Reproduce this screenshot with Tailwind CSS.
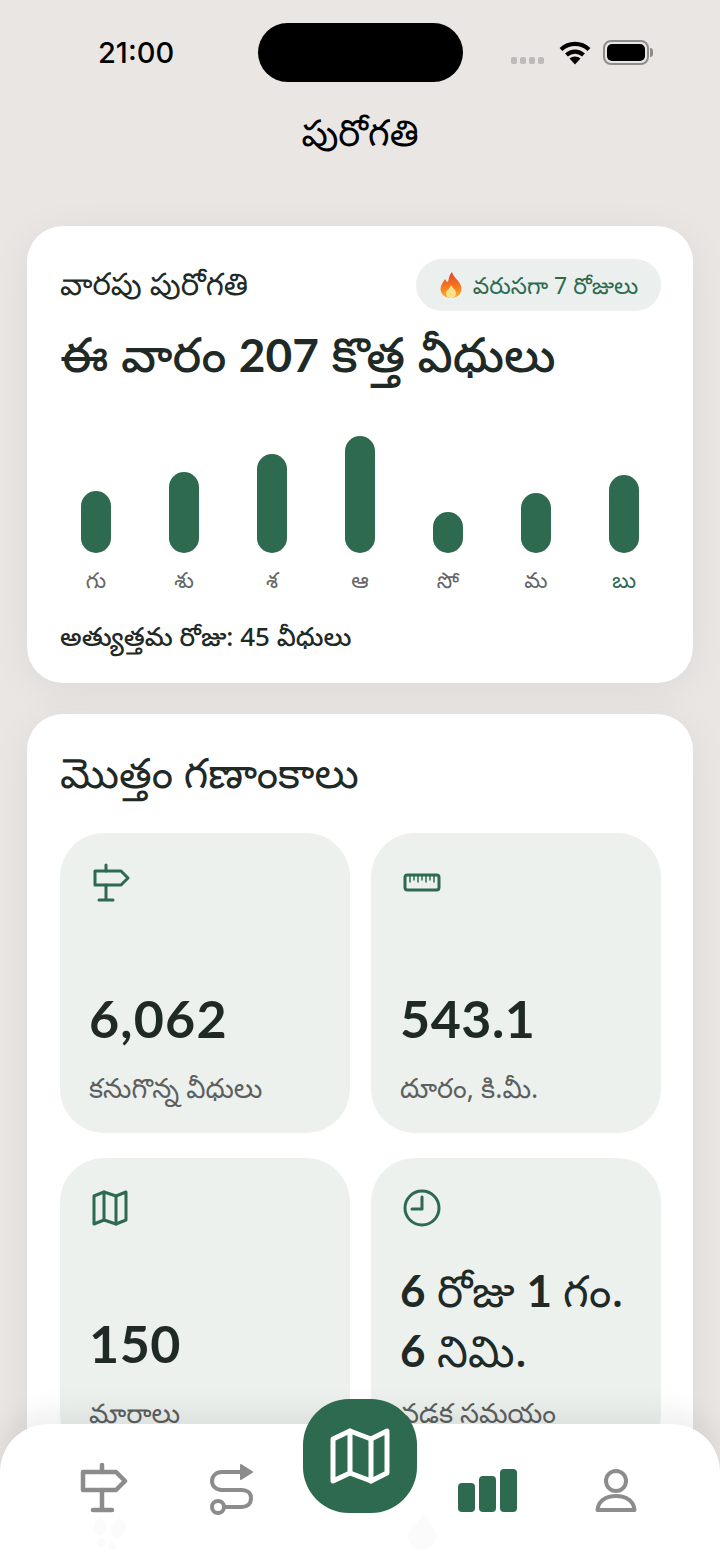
<!DOCTYPE html>
<html lang="te">
  <head>
    <meta charset="UTF-8" />
    <meta name="viewport" content="width=device-width, initial-scale=1.0" />
    <title>పురోగతి</title>
    <script src="https://cdn.jsdelivr.net/npm/@tailwindcss/browser@4"></script>
  </head>
  <body class="bg-[#e9e6e3]">
    <div class="relative h-[1564px] w-[720px] overflow-hidden bg-[#e9e6e3] font-['Noto_Sans','Noto_Sans_Telugu','Lato',sans-serif] text-[#1f2a26]">
      <!-- Status bar -->
      <div class="relative h-[106px]">
        <div class="absolute left-[98px] top-[36px] font-['Inter',sans-serif] text-[29px] leading-[34px] font-medium text-black">21:00</div>
        <div class="absolute left-[258px] top-[23px] h-[59px] w-[205px] rounded-[30px] bg-black"></div>
        <div class="absolute left-[511px] top-[57px] flex gap-[3px]">
          <span class="h-[7px] w-[6px] rounded-[2px] bg-[#bdbbb9]"></span>
          <span class="h-[7px] w-[6px] rounded-[2px] bg-[#bdbbb9]"></span>
          <span class="h-[7px] w-[6px] rounded-[2px] bg-[#bdbbb9]"></span>
          <span class="h-[7px] w-[6px] rounded-[2px] bg-[#bdbbb9]"></span>
        </div>
        <svg class="absolute left-[559px] top-[40px]" width="32" height="25" viewBox="0 0 32 25" fill="none">
          <path d="M2 9.5C10 2 22 2 30 9.5" stroke="#000" stroke-width="4.2" />
          <path d="M7.5 15C12.5 10.5 19.5 10.5 24.5 15" stroke="#000" stroke-width="4.2" />
          <path d="M16 24.5L10.5 18.5C13.5 15.8 18.5 15.8 21.5 18.5Z" fill="#000" />
        </svg>
        <div class="absolute left-[603px] top-[40px] flex h-[25px] w-[46px] items-center justify-center rounded-[8px] border-2 border-[#8f8d8b]">
          <div class="h-[17px] w-[38px] rounded-[5px] bg-black"></div>
        </div>
        <div class="absolute left-[650px] top-[48px] h-[9px] w-[3px] rounded-r-full bg-[#8f8d8b]"></div>
      </div>

      <h1 class="h-[120px] pt-[4px] text-center text-[37px] leading-[44px] font-normal text-black">పురోగతి</h1>

      <main class="flex flex-col gap-[31px] px-[27px]">
        <!-- Weekly card -->
        <section class="h-[457px] rounded-[36px] bg-white px-[33px] pt-[33px] shadow-[0_6px_40px_rgba(0,0,0,0.06)]">
          <div class="flex h-[52px] items-center justify-between">
            <h2 class="-mt-[5px] text-[31px] leading-[36px] font-normal">వారపు పురోగతి</h2>
            <div class="-mr-px flex h-[52px] w-[245px] items-center justify-center gap-[10px] rounded-full bg-[#ebefed] text-[23px] text-[#2d6a4f]">
              <svg width="24" height="28" viewBox="0 0 24 28">
                <defs>
                  <linearGradient id="flame" x1="0" y1="0" x2="0" y2="1">
                    <stop offset="0" stop-color="#e8402a" />
                    <stop offset="0.6" stop-color="#f57c1f" />
                    <stop offset="1" stop-color="#fdb32b" />
                  </linearGradient>
                </defs>
                <path d="M13 1C14 6 20 9 22 15C24 22 19 27 12 27C5 27 0 22 2 15C3 12 5 10 6 8C7 10 8 11 9 11C10 8 10 4 13 1Z" fill="url(#flame)" />
                <path d="M12 14C13 17 17 18 17 22C17 25 15 27 12 27C9 27 7 25 7 22C7 19 11 18 12 14Z" fill="#fde08a" />
              </svg>
              <span>వరుసగా 7 రోజులు</span>
            </div>
          </div>
          <div class="mt-[13px] text-[48px] leading-[60px] font-medium">ఈ వారం <span class="font-['Lato',sans-serif] text-[46px] font-bold">207</span> కొత్త వీధులు</div>

          <div class="mt-[50px] -mx-[8px] grid grid-cols-7">
            <div class="flex h-[160px] flex-col items-center justify-end"><div class="mb-[18px] h-[62px] w-[30px] rounded-full bg-[#2d6a4f]"></div><div class="-mt-[2px] h-[26px] text-[22px] leading-[20px] text-[#666]">గు</div></div>
            <div class="flex h-[160px] flex-col items-center justify-end"><div class="mb-[18px] h-[81px] w-[30px] rounded-full bg-[#2d6a4f]"></div><div class="-mt-[2px] h-[26px] text-[22px] leading-[20px] text-[#666]">శు</div></div>
            <div class="flex h-[160px] flex-col items-center justify-end"><div class="mb-[18px] h-[99px] w-[30px] rounded-full bg-[#2d6a4f]"></div><div class="-mt-[2px] h-[26px] text-[22px] leading-[20px] text-[#666]">శ</div></div>
            <div class="flex h-[160px] flex-col items-center justify-end"><div class="mb-[18px] h-[117px] w-[30px] rounded-full bg-[#2d6a4f]"></div><div class="-mt-[2px] h-[26px] text-[22px] leading-[20px] text-[#666]">ఆ</div></div>
            <div class="flex h-[160px] flex-col items-center justify-end"><div class="mb-[18px] h-[41px] w-[30px] rounded-full bg-[#2d6a4f]"></div><div class="-mt-[2px] h-[26px] text-[22px] leading-[20px] text-[#666]">సో</div></div>
            <div class="flex h-[160px] flex-col items-center justify-end"><div class="mb-[18px] h-[60px] w-[30px] rounded-full bg-[#2d6a4f]"></div><div class="-mt-[2px] h-[26px] text-[22px] leading-[20px] text-[#666]">మ</div></div>
            <div class="flex h-[160px] flex-col items-center justify-end"><div class="mb-[18px] h-[78px] w-[30px] rounded-full bg-[#2d6a4f]"></div><div class="-mt-[2px] h-[26px] text-[22px] leading-[20px] text-[#2d6a4f]">బు</div></div>
          </div>
          <div class="mt-[25px] text-[26px] leading-[32px] font-medium">అత్యుత్తమ రోజు: 45 వీధులు</div>
        </section>

        <!-- Totals card -->
        <section class="h-[800px] rounded-[36px] bg-white px-[33px] pt-[33px] shadow-[0_6px_40px_rgba(0,0,0,0.06)]">
          <h2 class="text-[42px] leading-[50px] font-normal">మొత్తం గణాంకాలు</h2>
          <div class="mt-[36px] grid grid-cols-[290px_290px] gap-x-[21px] gap-y-[25px]">
            <div class="relative h-[300px] rounded-[44px] bg-[#ecf1ee] px-[29px] pt-[30px]">
              <svg width="40" height="40" viewBox="0 0 40 40" fill="none" stroke="#2d6a4f" stroke-width="3" stroke-linecap="round" stroke-linejoin="round" class="ml-[2px]">
                <path d="M4 8H30L37 15L30 22H4Z" />
                <path d="M15 2V8M15 22V37M8 37H22" />
              </svg>
              <div class="absolute bottom-[29px] left-[29px]">
                <div class="font-['Lato',sans-serif] text-[52px] leading-[60px] font-bold tracking-[1.2px]">6,062</div>
                <div class="mt-[24px] text-[27px] leading-[32px] text-[#5c5f5d]">కనుగొన్న వీధులు</div>
              </div>
            </div>
            <div class="relative h-[300px] rounded-[44px] bg-[#ecf1ee] px-[29px] pt-[30px]">
              <svg width="40" height="40" viewBox="0 0 40 40" fill="none" stroke="#2d6a4f" stroke-linecap="round" stroke-linejoin="round" class="ml-[2px]">
                <rect x="3" y="12" width="34" height="15" rx="2.5" stroke-width="3" />
                <path d="M8 13V19M12 13V17M16 13V19M20 13V17M24 13V19M28 13V17M32 13V19" stroke-width="1.5" />
              </svg>
              <div class="absolute bottom-[29px] left-[29px]">
                <div class="font-['Lato',sans-serif] text-[52px] leading-[60px] font-bold tracking-[0.5px]">543.1</div>
                <div class="mt-[24px] text-[27px] leading-[32px] text-[#5c5f5d]">దూరం, కి.మీ.</div>
              </div>
            </div>
            <div class="relative h-[300px] rounded-[44px] bg-[#ecf1ee] px-[29px] pt-[30px]">
              <svg width="36" height="40" viewBox="0 0 36 40" fill="none" stroke="#2d6a4f" stroke-width="3" stroke-linecap="round" stroke-linejoin="round" class="ml-[3px]">
                <path d="M2 8L12 4L24 8L34 4V32L24 36L12 32L2 36Z" />
                <path d="M12 4V32M24 8V36" />
              </svg>
              <div class="absolute bottom-[29px] left-[29px]">
                <div class="font-['Lato',sans-serif] text-[52px] leading-[60px] font-bold tracking-[0.5px]">150</div>
                <div class="mt-[24px] text-[27px] leading-[32px] text-[#5c5f5d]">మారాలు</div>
              </div>
            </div>
            <div class="relative h-[300px] rounded-[44px] bg-[#ecf1ee] px-[29px] pt-[30px]">
              <svg width="40" height="40" viewBox="0 0 40 40" fill="none" stroke="#2d6a4f" stroke-width="3" stroke-linecap="round" stroke-linejoin="round" class="ml-[2px]">
                <circle cx="20" cy="20" r="17" />
                <path d="M20 9V21H10" />
              </svg>
              <div class="absolute bottom-[29px] left-[29px]">
                <div class="whitespace-nowrap font-['Noto_Sans',sans-serif] text-[44px] leading-[60px] font-medium"><span class="font-['Lato',sans-serif] font-bold">6</span> రోజు <span class="font-['Lato',sans-serif] font-bold">1</span> గం.<br /><span class="font-['Lato',sans-serif] font-bold">6</span> నిమి.</div>
                <div class="mt-[17px] text-[27px] leading-[32px] text-[#5c5f5d]">నడక సమయం</div>
              </div>
            </div>
          </div>
        </section>
      </main>

      <!-- Tab bar -->
      <nav class="absolute inset-x-0 bottom-0 h-[140px] rounded-t-[48px] bg-white shadow-[0_-12px_30px_rgba(0,0,0,0.07)]">
        <svg class="absolute left-[92px] top-[93px]" width="36" height="34" viewBox="0 0 36 34" fill="#fafbfa">
          <ellipse cx="8" cy="10" rx="6" ry="9" />
          <ellipse cx="26" cy="12" rx="7" ry="10" transform="rotate(15 26 12)" />
          <ellipse cx="20" cy="29" rx="4" ry="4" />
          <ellipse cx="9" cy="26" rx="4" ry="5" />
        </svg>
        <svg class="absolute left-[407px] top-[86px]" width="30" height="40" viewBox="0 0 30 40" fill="#fafbfa">
          <path d="M16 1C17 9 28 15 29 25C30 34 23 40 15 40C7 40 1 34 1 26C1 18 14 12 16 1Z" />
        </svg>

        <div class="relative grid h-[140px] grid-cols-[128px_128px_128px_128px_128px] px-[40px] pt-[39px]">
          <div class="flex justify-center">
            <svg width="48" height="52" viewBox="0 0 48 52" fill="none" stroke="#8c8c8c" stroke-width="4.5" stroke-linecap="round" stroke-linejoin="round">
              <path d="M3 9H36L45 18L36 27H3Z" />
              <path d="M22 2V9M22 27V47M13 47H32" />
            </svg>
          </div>
          <div class="flex justify-center">
            <svg width="44" height="52" viewBox="0 0 44 52" fill="none" stroke="#8c8c8c" stroke-width="4" stroke-linecap="round" stroke-linejoin="round">
              <path d="M30 9H12C6 9 2 13 2 18C2 23 6 27 12 27H32C37 27 41 30 41 35C41 41 37 44 32 44H14" />
              <circle cx="8" cy="44" r="6" />
              <path d="M31 2L42 9L31 16Z" fill="#8c8c8c" stroke-width="2" />
            </svg>
          </div>
          <div></div>
          <div class="flex justify-center">
            <svg width="60" height="44" viewBox="0 0 60 44" class="mt-[6px]" fill="#2d6a4f">
              <rect x="0" y="14" width="17" height="29" rx="4" />
              <rect x="21" y="7" width="17" height="36" rx="4" />
              <rect x="42" y="0" width="17" height="43" rx="4" />
            </svg>
          </div>
          <div class="flex justify-center">
            <svg width="42" height="44" viewBox="0 0 42 44" fill="none" stroke="#8c8c8c" stroke-width="4" stroke-linejoin="round" class="mt-[6px]">
              <circle cx="21" cy="12" r="10" />
              <path d="M2.5 41C3 32 11 27 21 27C31 27 39 32 39.5 41Z" />
            </svg>
          </div>
        </div>
        <!-- centre map button -->
        <div class="absolute left-[303px] -top-[25px] flex h-[114px] w-[114px] items-center justify-center rounded-[46px] bg-[#2d6a4f]">
          <svg width="60" height="58" viewBox="0 0 60 58" fill="none" stroke="#fff" stroke-width="5" stroke-linecap="round" stroke-linejoin="round">
            <path d="M3 12L20 4L41 12L57 4V46L41 54L20 46L3 54Z" />
            <path d="M20 4V46M41 12V54" />
          </svg>
        </div>
      </nav>
    </div>
  </body>
</html>
